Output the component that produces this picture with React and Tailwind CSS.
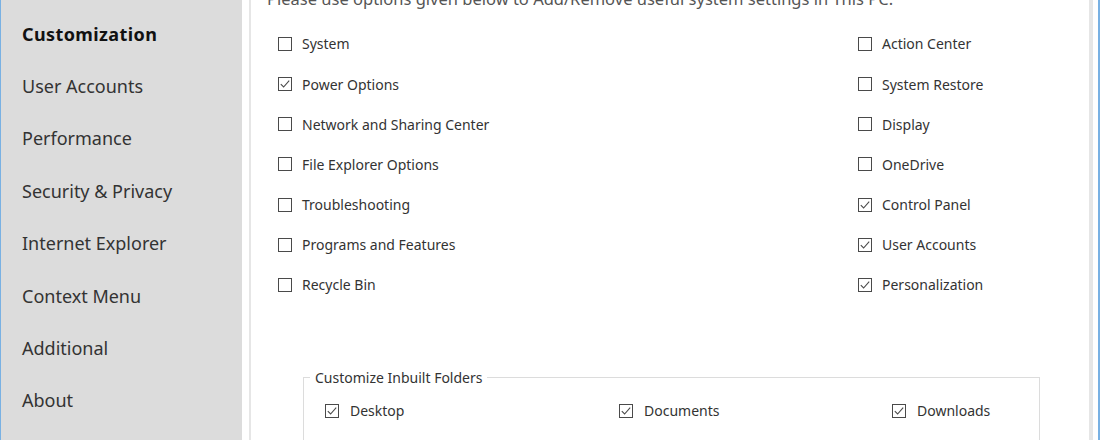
import React from 'react'

const font = { fontFamily: '"Noto Sans", "Open Sans", sans-serif' }

const menu = [
  'Customization',
  'User Accounts',
  'Performance',
  'Security & Privacy',
  'Internet Explorer',
  'Context Menu',
  'Additional',
  'About',
]

const leftOpts = [
  ['System', false],
  ['Power Options', true],
  ['Network and Sharing Center', false],
  ['File Explorer Options', false],
  ['Troubleshooting', false],
  ['Programs and Features', false],
  ['Recycle Bin', false],
]

const rightOpts = [
  ['Action Center', false],
  ['System Restore', false],
  ['Display', false],
  ['OneDrive', false],
  ['Control Panel', true],
  ['User Accounts', true],
  ['Personalization', true],
]

function Box({ checked }) {
  return (
    <svg width="14" height="14" viewBox="0 0 14 14" className="flex-shrink-0">
      <rect x="0.5" y="0.5" width="13" height="13" fill="white" stroke="#4a4a4a" strokeWidth="1" />
      {checked && (
        <polyline points="2.8,7.2 5.6,10 11.2,3.6" fill="none" stroke="#4a4a4a" strokeWidth="1.1" />
      )}
    </svg>
  )
}

function Check({ label, checked }) {
  return (
    <div className="flex items-center gap-[10px] h-[40.2px] text-[14px] text-[#333]">
      <Box checked={checked} />
      <span>{label}</span>
    </div>
  )
}

export default function App() {
  return (
    <div className="flex h-[440px] w-[1100px] bg-white overflow-hidden" style={font}>
      {/* sidebar */}
      <div className="w-[242px] flex-shrink-0 bg-[#dcdcdc] border-l border-[#79b1e3] pt-[8px]">
        {menu.map((m, i) => (
          <div
            key={m}
            className={
              'h-[52.4px] flex items-center pl-[21px] text-[18px] ' +
              (i === 0 ? 'font-bold text-[#111] tracking-[0.4px]' : 'text-[#333]')
            }>
            {m}
          </div>
        ))}
      </div>

      <div className="w-[7px] flex-shrink-0" />

      {/* main panel */}
      <div className="flex-1 border-l-2 border-r-[4px] border-[#e6e6e6] relative">
        <div className="-mt-[13px] pl-[16px] text-[16.5px] text-[#555] whitespace-nowrap">
          Please use options given below to Add/Remove useful system settings in This PC.
        </div>

        <div className="flex pl-[27px] mt-[12px]">
          <div className="w-[580px]">
            {leftOpts.map(([l, c]) => (
              <Check key={l} label={l} checked={c} />
            ))}
          </div>
          <div>
            {rightOpts.map(([l, c]) => (
              <Check key={l} label={l} checked={c} />
            ))}
          </div>
        </div>

        <div className="ml-[52px] w-[737px] mt-[72px] border border-[#dcdcdc] h-[80px] relative">
          <div className="absolute -top-[11px] left-[6px] bg-white px-[5px] text-[14px] text-[#333]">
            Customize Inbuilt Folders
          </div>
          <div className="flex pt-[22px] pl-[21px] text-[14px] text-[#333]">
            <div className="w-[294px] flex items-center gap-[11px]">
              <Box checked />
              <span>Desktop</span>
            </div>
            <div className="w-[273px] flex items-center gap-[11px]">
              <Box checked />
              <span>Documents</span>
            </div>
            <div className="flex items-center gap-[11px]">
              <Box checked />
              <span>Downloads</span>
            </div>
          </div>
        </div>
      </div>

      <div className="w-[5px] flex-shrink-0" />
      <div className="w-[2px] flex-shrink-0 bg-[#79b1e3]" />
    </div>
  )
}
